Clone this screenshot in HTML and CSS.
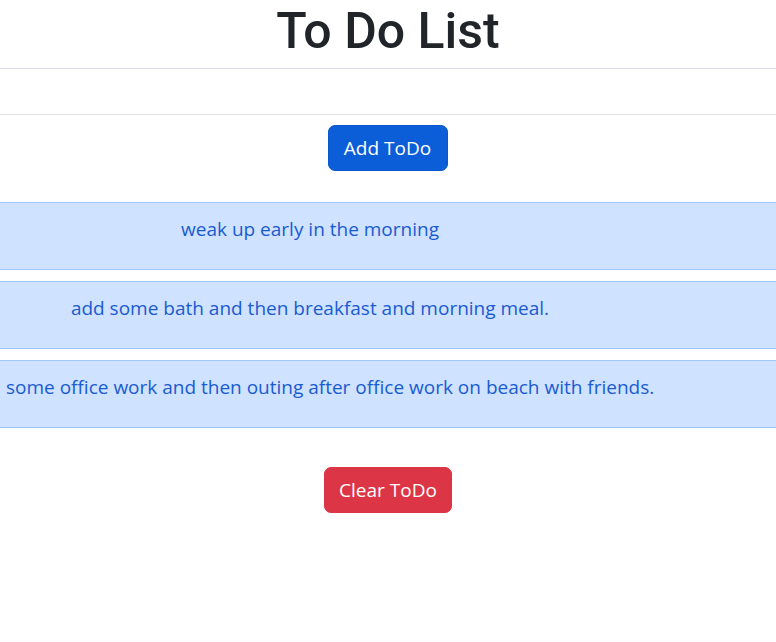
FILE: index.html
```html
<!DOCTYPE html>
<html lang="en">
<head>
<meta charset="utf-8">
<title>To Do List</title>
<link rel="stylesheet" href="styles.css">
</head>
<body>
  <h1 class="title">To Do List</h1>
  <hr class="rule rule-top">
  <div class="input-gap"></div>
  <hr class="rule">
  <div class="actions">
    <button class="btn btn-primary">Add ToDo</button>
  </div>
  <div class="list">
    <div class="alert"><div class="alert-text">weak up early in the morning</div></div>
    <div class="alert"><div class="alert-text">add some bath and then breakfast and morning meal.</div></div>
    <div class="alert"><div class="alert-text">some office work and then outing after office work on beach with friends.</div></div>
  </div>
  <div class="actions actions-clear">
    <button class="btn btn-danger">Clear ToDo</button>
  </div>
</body>
</html>
```
FILE: styles.css
```css
html, body {
  margin: 0;
  padding: 0;
  background: #ffffff;
}
body {
  font-family: "Open Sans", "Noto Sans", sans-serif;
  color: #212529;
  overflow: hidden;
}
.title {
  margin: 0;
  padding-top: 3px;
  font-family: Roboto, "Open Sans", sans-serif;
  font-size: 50px;
  font-weight: 500;
  line-height: 56px;
  text-align: center;
  color: #212529;
}
.rule {
  margin: 0;
  border: 0;
  border-top: 1px solid #dedfe6;
  height: 0;
}
.rule-top {
  margin-top: 9px;
}
.input-gap {
  height: 45px;
}
.actions {
  display: flex;
  justify-content: center;
  padding-top: 10px;
}
.btn {
  font-family: inherit;
  font-size: 19px;
  line-height: 28px;
  padding: 8px 15px;
  border-radius: 7px;
  border: 1px solid transparent;
  color: #ffffff;
  cursor: pointer;
}
.btn-primary {
  background: #0b5ed7;
  border-color: #0a58ca;
  padding: 8px 16px 8px 15px;
}
.btn-danger {
  background: #dc3545;
  border-color: #dc3545;
  padding: 8px 14px;
}
.list {
  margin-top: 31px;
  display: flex;
  flex-direction: column;
  gap: 11px;
}
.alert {
  background: #cfe2ff;
  border-top: 1px solid #9ec5fe;
  border-bottom: 1px solid #9ec5fe;
  height: 66px;
  box-sizing: content-box;
  display: flex;
}
.alert-text {
  width: 608px;
  flex: none;
  padding: 11px 0 0 6px;
  text-align: center;
  white-space: nowrap;
  font-size: 19px;
  line-height: 30px;
  color: #1a5bd2;
}
.actions-clear {
  padding-top: 39px;
}
```
